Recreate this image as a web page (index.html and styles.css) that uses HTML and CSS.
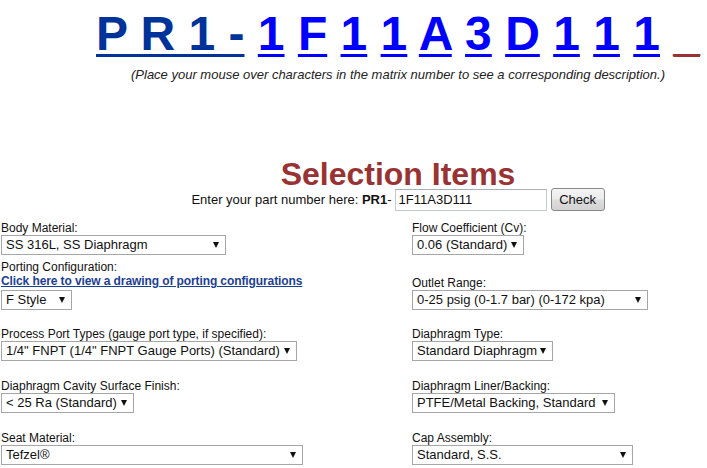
FILE: index.html
```html
<!DOCTYPE html>
<html>
<head>
<meta charset="utf-8">
<link rel="stylesheet" href="styles.css">
</head>
<body>
<div class="page">
  <div class="head">
    <div class="matrix"><a class="base">P R 1 -</a> <a class="ch">1</a> <a class="ch">F</a> <a class="ch">1</a> <a class="ch">1</a> <a class="ch">A</a> <a class="ch">3</a> <a class="ch">D</a> <a class="ch">1</a> <a class="ch">1</a> <a class="ch">1</a> <span class="tail">_</span></div>
    <div class="note">(Place your mouse over characters in the matrix number to see a corresponding description.)</div>
    <h1 class="title">Selection Items</h1>
    <div class="enter">
      <span class="enter-text">Enter your part number here: <b>PR1</b>-</span>
      <input class="part" type="text" value="1F11A3D111">
      <button class="check" type="button">Check</button>
    </div>
  </div>
  <div class="form">
    <div class="cell r1">
      <div class="lbl">Body Material:</div>
      <span class="sel w-body"><select><option>SS 316L, SS Diaphragm</option></select></span>
    </div>
    <div class="cell r1 right">
      <div class="lbl">Flow Coefficient (Cv):</div>
      <span class="sel w-flow"><select><option>0.06 (Standard)</option></select></span>
    </div>
    <div class="cell r2">
      <div class="lbl">Porting Configuration:</div>
      <a class="link" href="#">Click here to view a drawing of porting configurations</a>
      <span class="sel w-port"><select><option>F Style</option></select></span>
    </div>
    <div class="cell r2 right">
      <div class="lbl">Outlet Range:</div>
      <span class="sel w-outlet"><select><option>0-25 psig (0-1.7 bar) (0-172 kpa)</option></select></span>
    </div>
    <div class="cell r3">
      <div class="lbl">Process Port Types (gauge port type, if specified):</div>
      <span class="sel w-process"><select><option>1/4" FNPT (1/4" FNPT Gauge Ports) (Standard)</option></select></span>
    </div>
    <div class="cell r3 right">
      <div class="lbl">Diaphragm Type:</div>
      <span class="sel w-dtype"><select><option>Standard Diaphragm</option></select></span>
    </div>
    <div class="cell">
      <div class="lbl">Diaphragm Cavity Surface Finish:</div>
      <span class="sel w-finish"><select><option>&lt; 25 Ra (Standard)</option></select></span>
    </div>
    <div class="cell right">
      <div class="lbl">Diaphragm Liner/Backing:</div>
      <span class="sel w-liner"><select><option>PTFE/Metal Backing, Standard</option></select></span>
    </div>
    <div class="cell">
      <div class="lbl">Seat Material:</div>
      <span class="sel w-seat"><select><option>Tefzel®</option></select></span>
    </div>
    <div class="cell right">
      <div class="lbl">Cap Assembly:</div>
      <span class="sel w-cap"><select><option>Standard, S.S.</option></select></span>
    </div>
  </div>
</div>
</body>
</html>
```

FILE: styles.css
```css
html {
  overflow: hidden;
}
body {
  margin: 0;
  background: #fff;
  font-family: "Liberation Sans", Arial, sans-serif;
  color: #111;
}
.page {
  width: 707px;
}
.head {
  padding-left: 89px;
}
.matrix {
  padding-top: 6px;
  text-align: center;
  font-size: 48px;
  font-weight: bold;
  line-height: 55px;
  white-space: nowrap;
}
.matrix a,
.matrix .tail {
  text-decoration: underline;
  text-decoration-thickness: 3px;
  text-underline-offset: 4px;
  text-decoration-skip-ink: none;
}
.base {
  color: #003399;
}
.ch {
  color: #0000ff;
}
.tail {
  color: #993333;
}
.note {
  margin-top: 6px;
  text-align: center;
  font-size: 13px;
  font-style: italic;
  line-height: 15px;
  color: #222;
  white-space: nowrap;
}
.title {
  margin: 79px 0 0;
  text-align: center;
  font-size: 32px;
  font-weight: bold;
  line-height: 27px;
  color: #993333;
}
.enter {
  display: flex;
  justify-content: center;
  align-items: center;
  height: 23px;
  font-size: 13px;
}
.enter-text {
  margin-right: 3px;
}
.part {
  box-sizing: border-box;
  width: 152px;
  height: 22px;
  margin: 0;
  padding: 0 3px;
  border: 1px solid #c5c9d0;
  border-top-color: #abadb3;
  font-family: "Liberation Sans", Arial, sans-serif;
  font-size: 13px;
  color: #111;
}
.check {
  box-sizing: border-box;
  width: 54px;
  height: 23px;
  margin-left: 4px;
  padding: 0;
  border: 1px solid #8a8a8a;
  border-radius: 3px;
  background: linear-gradient(#f4f4f4 0%, #ebebeb 48%, #dddddd 52%, #d2d2d2 100%);
  font-family: "Liberation Sans", Arial, sans-serif;
  font-size: 13px;
  color: #111;
}
.form {
  margin-top: 10px;
  display: grid;
  grid-template-columns: 411px 1fr;
  align-items: end;
  padding-left: 1px;
}
.cell {
  display: flex;
  flex-direction: column;
  align-items: flex-start;
  padding-top: 18px;
}
.cell.r1 {
  padding-top: 0;
}
.cell.r2 {
  padding-top: 5px;
}
.cell.r3 {
  padding-top: 17px;
}
.lbl {
  font-size: 12px;
  line-height: 14px;
}
.link {
  font-size: 12px;
  font-weight: bold;
  line-height: 15px;
  letter-spacing: -0.1px;
  color: #1c3f94;
  text-decoration: underline;
  margin-bottom: 1px;
}
.sel {
  position: relative;
  display: block;
}
.sel select {
  appearance: none;
  -webkit-appearance: none;
  box-sizing: border-box;
  display: block;
  width: 100%;
  height: 20px;
  margin: 0;
  padding: 0 0 0 4px;
  border: 1px solid #a6a6a6;
  border-radius: 0;
  background: #fff;
  font-family: "Liberation Sans", Arial, sans-serif;
  font-size: 13px;
  line-height: 18px;
  color: #111;
}
.sel::after {
  content: "";
  position: absolute;
  right: 7px;
  top: 7px;
  width: 0;
  height: 0;
  border-left: 3px solid transparent;
  border-right: 3px solid transparent;
  border-top: 6px solid #111;
  pointer-events: none;
}
.w-body { width: 225px; }
.w-flow { width: 112px; }
.w-port { width: 71px; }
.w-outlet { width: 236px; }
.w-process { width: 296px; }
.w-dtype { width: 141px; }
.w-finish { width: 133px; }
.w-liner { width: 203px; }
.w-seat { width: 302px; }
.w-cap { width: 221px; }
```
